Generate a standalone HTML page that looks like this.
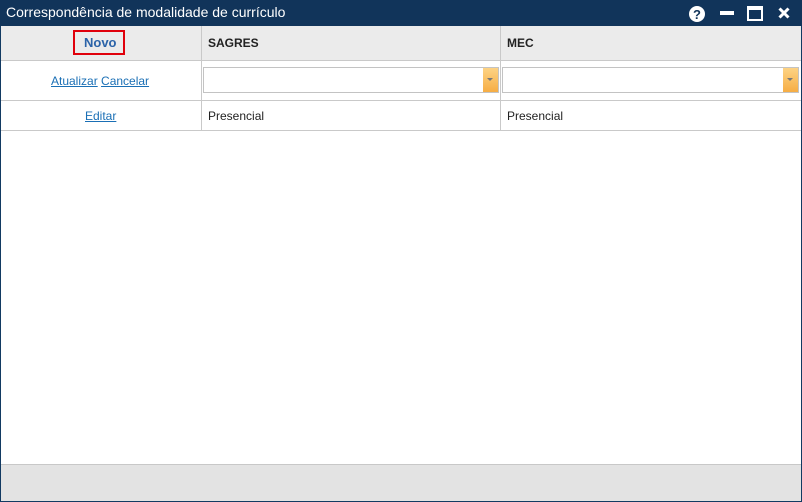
<!DOCTYPE html>
<html><head><style>
*{margin:0;padding:0;box-sizing:border-box}
body{width:802px;height:502px;overflow:hidden;font-family:"Liberation Sans",sans-serif;background:#fff;position:relative}
.abs{position:absolute}
.title{position:absolute;left:0;top:0;width:802px;height:26px;background:#11345a;color:#fff;font-size:14px;line-height:25px;padding-left:6px}
.hdr{position:absolute;left:1px;top:26px;width:800px;height:35px;background:#ebebeb;border-bottom:1px solid #c9c9c9}
.vl{position:absolute;width:1px;background:#c9c9c9}
.hl{position:absolute;height:1px;background:#c9c9c9;left:1px;width:800px}
.t{position:absolute;font-size:12px;color:#222}
a{color:#1a6fb5;text-decoration:underline;font-size:12px}
.dd{position:absolute;height:26px;border:1px solid #c3c3c3;background:#fff}
.dd .ar{position:absolute;right:0;top:0;width:15px;height:24px;background:linear-gradient(#fdd384,#f6ad44)}
.dd .ar:after{content:"";position:absolute;left:4px;top:10px;border-left:3px solid transparent;border-right:3px solid transparent;border-top:3px solid #777}
.foot{position:absolute;left:1px;top:464px;width:800px;height:37px;background:#e3e3e3;border-top:1px solid #c8c8c8}
</style></head><body>
<div class="title">Correspondência de modalidade de currículo</div>
<div class="abs" style="left:0;top:26px;width:1px;height:476px;background:#123a62"></div>
<div class="abs" style="left:801px;top:26px;width:1px;height:476px;background:#123a62"></div>
<div class="abs" style="left:0;top:501px;width:802px;height:1px;background:#123a62"></div>
<svg class="abs" style="left:688px;top:5px" width="18" height="18"><circle cx="9" cy="9" r="8" fill="#fff"/><text x="9" y="14" text-anchor="middle" font-size="13" font-weight="bold" fill="#11345a" font-family="Liberation Sans">?</text></svg>
<div class="abs" style="left:720px;top:11px;width:14px;height:4px;background:#fff"></div>
<div class="abs" style="left:747px;top:6px;width:16px;height:15px;border:2px solid #fff;border-top-width:4px"></div>
<svg class="abs" style="left:778px;top:7px" width="12" height="12"><path d="M1.5 1.5L10.5 10.5M10.5 1.5L1.5 10.5" stroke="#fff" stroke-width="3"/></svg>
<div class="hdr"></div>
<div class="abs" style="left:73px;top:30px;width:52px;height:25px;border:2px solid #e0000b"></div>
<div class="t" style="left:84px;top:35px;font-weight:bold;color:#2b63a8;font-size:13px">Novo</div>
<div class="t" style="left:208px;top:36px;font-weight:bold">SAGRES</div>
<div class="t" style="left:507px;top:36px;font-weight:bold">MEC</div>
<div class="hl" style="top:100px"></div>
<div class="hl" style="top:130px"></div>
<div class="vl" style="left:201px;top:26px;height:105px"></div>
<div class="vl" style="left:500px;top:26px;height:105px"></div>
<div class="t" style="left:51px;top:74px"><a>Atualizar</a> <a>Cancelar</a></div>
<div class="dd" style="left:203px;top:67px;width:296px"><div class="ar"></div></div>
<div class="dd" style="left:502px;top:67px;width:297px"><div class="ar"></div></div>
<div class="t" style="left:85px;top:109px"><a>Editar</a></div>
<div class="t" style="left:208px;top:109px">Presencial</div>
<div class="t" style="left:507px;top:109px">Presencial</div>
<div class="foot"></div>
</body></html>
